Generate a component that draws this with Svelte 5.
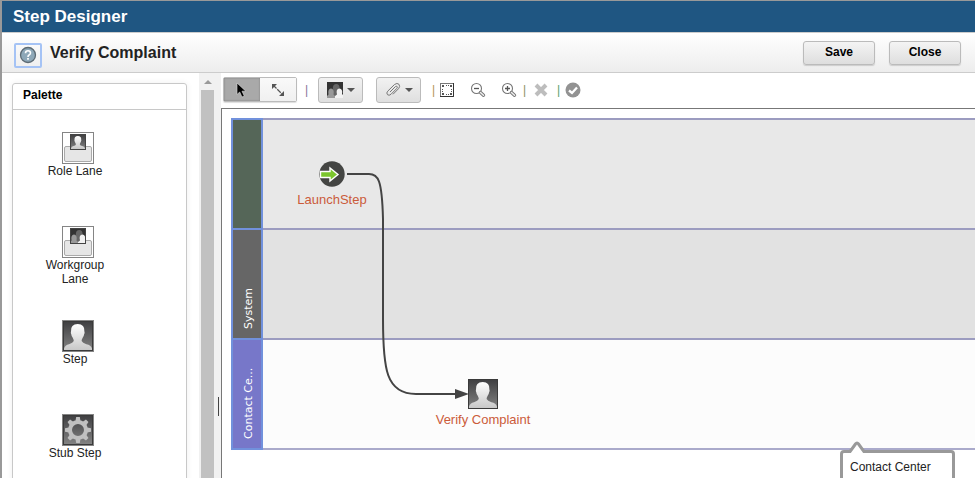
<script>
  const palette = [
    { label: 'Role Lane', icon: 'role' },
    { label: 'Workgroup Lane', icon: 'workgroup' },
    { label: 'Step', icon: 'step' },
    { label: 'Stub Step', icon: 'stub' }
  ];
  const lanes = [
    { name: '', head: '#556658', fill: '#e8e8e8' },
    { name: 'System', head: '#666666', fill: '#e2e2e2' },
    { name: 'Contact Ce...', head: '#7777c9', fill: '#fcfcfc' }
  ];
  const teeth = [0, 45, 90, 135, 180, 225, 270, 315];
  let tool = $state('select');
</script>

{#snippet person()}
  <rect width="32" height="32" fill="#858585" />
  <rect x="1" y="1" width="30" height="30" fill="#3a3a3a" />
  <rect x="2" y="2" width="28" height="28" fill="url(#tile)" />
  <path d="M2 30V28.500Q3 25 7 24.200Q11 23 11.800 21Q11.800 19.500 10.600 17.500Q9.500 16.500 9.200 14Q8.500 13 9 11.500Q8.500 4 15.700 4T22.400 11.500Q23 13 22.200 14Q21.800 16.500 20.800 17.500Q19.500 19.500 19.600 21Q20.500 23 24.400 24.200Q29 25 30 28.500V30Z" fill="url(#body)" />
{/snippet}

{#snippet group()}
  <rect width="16" height="16" fill="#333" />
  <path d="M6 16V9Q5 2 9 2T12.500 7V16Z" fill="#666" />
  <path d="M0 16V14L1.500 12.500Q.5 7 4 6.500Q7.500 7 6.500 12.500L8 14V16Z" fill="#999" />
  <path d="M8 16V14L10 12.500Q8.500 7 12.500 6.500Q16 7 15 12L16 13V16Z" fill="#f2f2f2" />
{/snippet}

<svg class="defs" width="0" height="0" aria-hidden="true">
  <defs>
    <linearGradient id="tile" x1="0" y1="0" x2="0" y2="1"><stop offset="0" stop-color="#404042" /><stop offset="1" stop-color="#828282" /></linearGradient>
    <linearGradient id="body" x1="0" y1="0" x2="0" y2="1"><stop offset="0" stop-color="#fff" /><stop offset="1" stop-color="#c8c8c8" /></linearGradient>
  </defs>
</svg>

<div class="app">
  <header class="title">Step Designer</header>
  <div class="bar">
    <button class="help" aria-label="Help">
      <svg width="18" height="18" viewBox="0 0 18 18">
        <circle cx="9" cy="9" r="7.500" fill="#8ea8b8" stroke="#5c6a73" stroke-width="1.300" />
        <path d="M6.500 7.200Q6.500 4.700 9 4.700T11.500 7Q11.500 8.200 10 9Q9 9.500 9 11" fill="none" stroke="#fff" stroke-width="1.600" />
        <rect x="8.100" y="12" width="1.800" height="1.700" fill="#fff" />
      </svg>
    </button>
    <h1>Verify Complaint</h1>
    <button class="action">Save</button>
    <button class="action">Close</button>
  </div>

  <div class="work">
    <aside>
      <section class="panel">
        <h2>Palette</h2>
        {#each palette as item}
          <div class="item">
            <svg width="32" height="32" viewBox="0 0 32 32">
              {#if item.icon === 'step'}
                {@render person()}
              {:else if item.icon === 'stub'}
                <rect width="32" height="32" fill="#858585" />
                <rect x="1" y="1" width="30" height="30" fill="#3a3a3a" />
                <rect x="2" y="2" width="28" height="28" fill="url(#tile)" />
                {#each teeth as angle}
                  <path d="M13.300 8L14.200 3H17.800L18.700 8Z" fill="#c0c0c0" transform="rotate({angle} 16 16)" />
                {/each}
                <circle cx="16" cy="16" r="8" fill="none" stroke="#c0c0c0" stroke-width="4" />
              {:else}
                <rect x=".5" y=".5" width="31" height="31" fill="#fff" stroke="#858585" />
                <path d="M2.500 28V16Q2.500 14.500 4 14.500H28Q29.500 14.500 29.500 16V28Q29.500 29.500 28 29.500H4Q2.500 29.500 2.500 28Z" fill="#e6e6e6" stroke="#aaa" />
                <g transform="translate(8 2)">
                  {#if item.icon === 'role'}
                    <g transform="scale(.5)">{@render person()}</g>
                  {:else}
                    {@render group()}
                  {/if}
                </g>
                <rect x="8.500" y="2.500" width="15" height="15" fill="none" stroke="#444" />
              {/if}
            </svg>
            <span>{item.label}</span>
          </div>
        {/each}
      </section>
    </aside>
    <div class="scroll"><i class="up"></i><i class="thumb"></i></div>
    <div class="split"><i></i></div>

    <main>
      <div class="tools">
        <div class="modes">
          <button class:on={tool === 'select'} aria-label="Select" onclick={() => (tool = 'select')}>
            <svg width="16" height="16" viewBox="0 0 16 16"><path d="M3 1V12.500L5.700 10L8 15L10.300 14L8 9.200H11.800Z" fill="#000" stroke="#ddd" stroke-width=".6" /></svg>
          </button>
          <button class:on={tool === 'connect'} aria-label="Connect" onclick={() => (tool = 'connect')}>
            <svg width="14" height="14" viewBox="0 0 14 14"><path d="M2 2L12 12" stroke="#555" stroke-width="1.200" stroke-dasharray="5 1" /><path d="M1 1H6L1 6ZM13 13H8L13 8Z" fill="#555" /></svg>
          </button>
        </div>
        <span class="sep first">|</span>
        <button class="drop" aria-label="Add lane">
          <svg width="16" height="16" viewBox="0 0 16 16">{@render group()}</svg><i></i>
        </button>
        <button class="drop clip" aria-label="Attachments">
          <svg width="16" height="16" viewBox="0 0 16 16"><path d="M5 10L10.500 4.500Q12 3.500 12.300 5Q12.500 5.700 11.500 6.700L6 12.300Q4 14 2.500 12.700Q1 11 2.700 9.200L9.500 2.500Q12 .5 14 2.300Q15.500 4.500 13.500 6.700L8 12.300" fill="none" stroke="#777" /></svg><i></i>
        </button>
        <span class="sep second">|</span>
        <button class="tool" aria-label="Fit selection">
          <svg width="16" height="16" viewBox="0 0 16 16"><rect x="1.500" y="1.500" width="13" height="13" fill="#fff" stroke="#777" /><path d="M14.500 1V14.500H1" fill="none" stroke="#333" /><path d="M3 3h2v2h-2zM11 3h2v2h-2zM3 11h2v2h-2zM11 11h2v2h-2zM7 3h1v1h-1zM9 3h1v1h-1zM7 12h1v1h-1zM9 12h1v1h-1zM3 7h1v1h-1zM3 9h1v1h-1zM12 7h1v1h-1zM12 9h1v1h-1z" fill="#555" /></svg>
        </button>
        {#each ['out', 'in'] as zoom}
          <button class="tool zoom" aria-label="Zoom {zoom}">
            <svg width="16" height="16" viewBox="0 0 16 16"><circle cx="6.500" cy="6.500" r="5" fill="#fff" stroke="#777" stroke-width="1.100" /><path d={zoom === 'in' ? 'M4 6.500H9M6.500 4V9' : 'M4 6.500H9'} stroke="#555" stroke-width="1.300" /><path d="M10.500 10.500L13.500 13.200" stroke="#777" stroke-width="3.400" stroke-linecap="round" /><path d="M10.500 10.500L13.500 13.200" stroke="#eee" stroke-width="1.500" stroke-linecap="round" /></svg>
          </button>
        {/each}
        <span class="sep third">|</span>
        <button class="tool" aria-label="Delete">
          <svg width="16" height="16" viewBox="0 0 16 16"><path d="M3 3L13 13M13 3L3 13" stroke="#bdbdbd" stroke-width="4" /></svg>
        </button>
        <span class="sep fourth">|</span>
        <button class="tool" aria-label="Validate">
          <svg width="16" height="16" viewBox="0 0 16 16"><circle cx="8" cy="8" r="7.500" fill="#929292" /><path d="M4 8.500L7 11L12 5.500" fill="none" stroke="#fff" stroke-width="2.300" /></svg>
        </button>
      </div>

      <div class="canvas">
        <div class="lanes">
          {#each lanes as lane}
            <div class="lane" style:background={lane.fill}>
              <div class="head" style:background={lane.head}><span>{lane.name}</span></div>
            </div>
          {/each}
        </div>

        <svg class="flow" width="160" height="260" viewBox="0 0 160 260">
          <path d="M26 25H48C57 25 61 30 62 70V170C62 220 65 245 95 245H135" fill="none" stroke="#444" stroke-width="2" />
          <path d="M134 240L148 245L134 250Z" fill="#444" />
        </svg>

        <div class="node launch">
          <svg width="30" height="30" viewBox="-2 -2 30 30"><circle cx="13" cy="13" r="12.700" fill="#444543" /><path d="M1.500 10.500H11V7L19 13.500L11 20V16.500H1.500Z" fill="#7bc62d" stroke="#fff" stroke-width="1.400" /></svg>
          <span>LaunchStep</span>
        </div>
        <div class="node verify">
          <svg width="30" height="30" viewBox="1 1 30 30">{@render person()}</svg>
          <span>Verify Complaint</span>
        </div>

        <div class="tip">
          <svg width="18" height="12" viewBox="0 0 18 12"><path d="M1 12L7.500 3Q9 1 10.500 3L17 12" fill="#fff" stroke="#999" stroke-width="3" /></svg>
          Contact Center
        </div>
      </div>
    </main>
  </div>
</div>

<style>
  :global(body) { margin: 0; }
  .defs { position: absolute; }
  .app {
    box-sizing: border-box;
    height: 100vh;
    overflow: hidden;
    display: flex;
    flex-direction: column;
    border-top: 1px solid #999;
    border-left: 2px solid #999;
    font: 12px/14px "Liberation Sans", Arial, sans-serif;
    color: #222;
    background: #fff;
  }
  svg { display: block; flex: none; }
  button { font: inherit; padding: 0; cursor: pointer; }
  .title {
    padding: 0 11px;
    background: #1f5682;
    color: #fff;
    font-size: 17px;
    font-weight: bold;
    line-height: 31px;
  }
  .bar {
    display: flex;
    align-items: center;
    padding: 0 14px 0 12px;
    height: 39px;
    border-top: 1px solid #ccc;
    border-bottom: 1px solid #ccc;
    background: linear-gradient(#fff, #ededed);
  }
  .help {
    display: flex;
    align-items: center;
    justify-content: center;
    width: 28px;
    height: 25px;
    margin-top: 5px;
    border: 2px solid #a5c3f5;
    border-radius: 2px;
    background: transparent;
  }
  h1 { flex: 1; margin: 0 0 0 8px; font-size: 16px; line-height: 20px; }
  .action {
    width: 72px;
    height: 24px;
    margin-left: 14px;
    padding-bottom: 1px;
    border: 1px solid #bbb;
    border-radius: 3px;
    background: linear-gradient(#f4f4f4, #dedede);
    box-shadow: 0 1px 1px #ccc;
    font-weight: bold;
    color: #000;
  }
  .work { flex: 1; min-height: 0; display: flex; }
  aside { width: 197px; flex: none; box-sizing: border-box; padding: 10px 12px 0 10px; overflow: hidden; }
  .panel {
    border: 1px solid #c8c8c8;
    border-radius: 3px;
    box-shadow: 0 0 6px #eee;
  }
  h2 {
    margin: 0 0 22px;
    padding: 0 10px 2px;
    border-bottom: 1px solid #c8c8c8;
    font-size: 12px;
    line-height: 23px;
    color: #000;
  }
  .item {
    display: flex;
    flex-direction: column;
    align-items: center;
    width: 64px;
    height: 94px;
    margin-left: 30px;
    text-align: center;
  }
  .item svg { margin-left: 6px; }
  .scroll {
    width: 13px;
    flex: none;
    display: flex;
    flex-direction: column;
    align-items: center;
    padding: 7px 3px 0 2px;
    background: #f1f1f1;
  }
  .up { border: 4px solid transparent; border-top: 0; border-bottom-color: #999; }
  .thumb { flex: 1; align-self: stretch; margin-top: 6px; background: #c1c1c1; }
  .split { width: 4px; flex: none; background: #f1f1f1; }
  .split i { display: block; width: 1px; height: 19px; margin: 324px 0 0 1px; background: #444; }
  main { flex: 1; min-width: 0; display: flex; flex-direction: column; }
  .tools { display: flex; align-items: center; height: 33px; padding: 0 0 2px 2px; }
  .modes { display: flex; border: 1px solid #bbb; border-radius: 2px; box-shadow: 0 1px 1px #ddd; }
  .modes button, .drop {
    display: flex;
    align-items: center;
    justify-content: center;
    border: 0;
    background: linear-gradient(#f9f9f9, #f0f0f0);
  }
  .modes button { width: 36px; height: 23px; }
  .modes .on { background: #a9a9a9; box-shadow: inset 0 0 2px #777; }
  .modes { margin-right: 2px; }
  .drop {
    width: 45px;
    height: 26px;
    gap: 4px;
    border: 1px solid #bbb;
    border-radius: 3px;
    background: linear-gradient(#f2f2f2, #dfdfdf);
  }
  .drop i { border: 4px solid transparent; border-bottom: 0; border-top-color: #555; }
  .clip { margin-left: 13px; }
  .sep { width: 3px; text-align: center; }
  .first { margin: 0 10px 0 6px; color: #84769a; }
  .second { margin: 0 4px 0 11px; color: #b59454; }
  .third { margin: 0 7px 0 6px; color: #899164; }
  .fourth { margin: 0 5px 0 8px; color: #57a06d; }
  .tool { border: 0; background: transparent; }
  .zoom { margin-left: 15px; }
  .canvas {
    position: relative;
    flex: 1;
    min-height: 0;
    padding: 9px 0 0 9px;
    overflow: hidden;
    border-top: 1px solid #777;
    border-left: 1px solid #777;
  }
  .lanes { border-bottom: 2px solid #aaaacb; }
  .lane { display: flex; height: 108px; border-top: 2px solid #9c9cc0; }
  .head {
    display: flex;
    align-items: flex-start;
    justify-content: center;
    box-sizing: border-box;
    width: 32px;
    margin: -2px 0;
    z-index: 1;
    border: 2px solid #7191dc;
    transform: rotate(180deg);
  }
  .head span {
    writing-mode: vertical-rl;
    padding: 9px 4px 0 0;
    font: 11px/14px "DejaVu Sans", Verdana, sans-serif;
    color: #fff;
  }
  .flow { position: absolute; left: 99px; top: 40px; z-index: 2; }
  .node {
    position: absolute;
    z-index: 3;
    display: flex;
    flex-direction: column;
    align-items: center;
    width: 120px;
    font-size: 13px;
    line-height: 16px;
    color: #cb5b3a;
  }
  .node span { margin-top: 3px; }
  .launch { left: 50px; top: 50px; }
  .verify { left: 201px; top: 270px; }
  .tip {
    position: absolute;
    z-index: 4;
    left: 618px;
    top: 341px;
    box-sizing: border-box;
    width: 115px;
    height: 40px;
    padding: 7px 0 0 7px;
    border: 3px solid #999;
    border-radius: 4px;
    background: #fff;
  }
  .tip svg { position: absolute; left: 5px; top: -12px; }
</style>
